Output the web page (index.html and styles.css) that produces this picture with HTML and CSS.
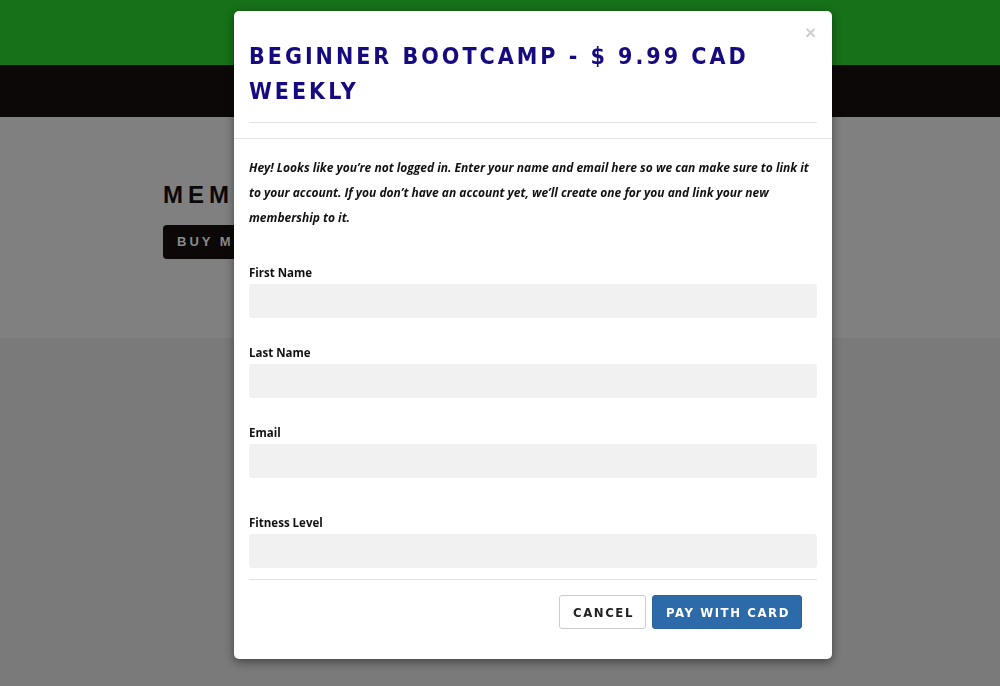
FILE: index.html
```html
<!DOCTYPE html>
<html lang="en">
<head>
<meta charset="utf-8">
<title>Beginner Bootcamp</title>
<link rel="stylesheet" href="styles.css">
</head>
<body>
<div class="page">
  <header class="topbar"></header>
  <nav class="navbar"></nav>
  <section class="hero">
    <h2 class="hero-title">MEMBERSHIPS</h2>
    <a class="hero-btn">BUY MEMBERSHIP</a>
  </section>
  <section class="lower"></section>
</div>

<div class="modal">
  <div class="modal-header">
    <button class="close" type="button">&times;</button>
    <h3 class="modal-title">BEGINNER BOOTCAMP - $ 9.99 CAD WEEKLY</h3>
  </div>
  <div class="modal-body">
    <p class="intro">Hey! Looks like you’re not logged in. Enter your name and email here so we can make sure to link it to your account. If you don’t have an account yet, we’ll create one for you and link your new membership to it.</p>
    <div class="field">
      <label class="label">First Name</label>
      <div class="input"></div>
    </div>
    <div class="field">
      <label class="label">Last Name</label>
      <div class="input"></div>
    </div>
    <div class="field">
      <label class="label">Email</label>
      <div class="input"></div>
    </div>
    <div class="field field-wide">
      <label class="label">Fitness Level</label>
      <div class="input"></div>
    </div>
  </div>
  <div class="modal-footer">
    <button class="btn btn-default" type="button">CANCEL</button>
    <button class="btn btn-primary" type="button">PAY WITH CARD</button>
  </div>
</div>
</body>
</html>
```

FILE: styles.css
```css
html, body {
  margin: 0;
  padding: 0;
  height: 100%;
}
body {
  font-family: "Open Sans", "Liberation Sans", sans-serif;
  background: #7a7a7a;
  overflow: hidden;
}
.page {
  display: flex;
  flex-direction: column;
  height: 686px;
}
.topbar {
  height: 65px;
  background: #167118;
}
.navbar {
  height: 52px;
  background: #0c0808;
}
.hero {
  height: 221px;
  background: #808080;
  box-sizing: border-box;
  padding: 64px 0 0 163px;
}
.hero-title {
  margin: 0 0 16px;
  font-family: "Liberation Sans", sans-serif;
  font-weight: 700;
  font-size: 24px;
  line-height: 28px;
  letter-spacing: 5px;
  color: #0c0808;
}
.hero-btn {
  display: inline-block;
  background: #0c0808;
  color: #8a8a8a;
  border-radius: 4px;
  padding: 0 14px;
  height: 34px;
  line-height: 34px;
  font-family: "Liberation Sans", sans-serif;
  font-weight: 700;
  font-size: 13px;
  letter-spacing: 3px;
}
.lower {
  flex: 1;
  background: #7a7a7a;
}

.modal {
  position: fixed;
  left: 234px;
  top: 11px;
  width: 598px;
  height: 648px;
  background: #fff;
  border-radius: 5px;
  box-shadow: 0 3px 10px rgba(0, 0, 0, 0.45);
  box-sizing: border-box;
  display: flex;
  flex-direction: column;
}
.modal-header {
  position: relative;
  padding: 28px 15px 15px;
  border-bottom: 1px solid #e5e5e5;
}
.close {
  position: absolute;
  top: 12px;
  right: 16px;
  border: 0;
  background: none;
  padding: 0;
  font-family: "Liberation Sans", sans-serif;
  font-size: 19px;
  font-weight: 700;
  line-height: 20px;
  color: #d0d0d0;
}
.modal-title {
  margin: 0;
  padding-bottom: 13px;
  border-bottom: 1px solid #e2e2e2;
  font-family: "DejaVu Sans Condensed", "DejaVu Sans", sans-serif;
  font-stretch: condensed;
  font-weight: 700;
  font-size: 23px;
  line-height: 35px;
  letter-spacing: 3px;
  color: #160a80;
}
.modal-body {
  padding: 16px 15px 0;
}
.intro {
  margin: 0 0 35px;
  font-size: 12px;
  line-height: 25px;
  font-weight: 700;
  font-style: italic;
  color: #111;
}
.field {
  margin-bottom: 27px;
}
.field-wide {
  margin-top: 37px;
  margin-bottom: 0;
}
.label {
  display: block;
  font-size: 11.5px;
  font-weight: 700;
  line-height: 16px;
  color: #111;
  margin-bottom: 3px;
}
.input {
  height: 34px;
  background: #f1f1f1;
  border-radius: 3px;
}
.modal-footer {
  margin: 11px 15px 0;
  border-top: 1px solid #e2e2e2;
  padding: 15px 15px 0;
  display: flex;
  justify-content: flex-end;
  gap: 6px;
}
.btn {
  height: 34px;
  box-sizing: border-box;
  border-radius: 3px;
  font-family: "DejaVu Sans Condensed", "DejaVu Sans", sans-serif;
  font-stretch: condensed;
  font-weight: 700;
  font-size: 13px;
  letter-spacing: 1.6px;
  padding: 0 11px 0 13px;
  cursor: pointer;
}
.btn-default {
  background: #fff;
  border: 1px solid #cccccc;
  color: #222;
}
.btn-primary {
  background: #2d6aa9;
  border: 1px solid #2a64a0;
  color: #fff;
}
```
